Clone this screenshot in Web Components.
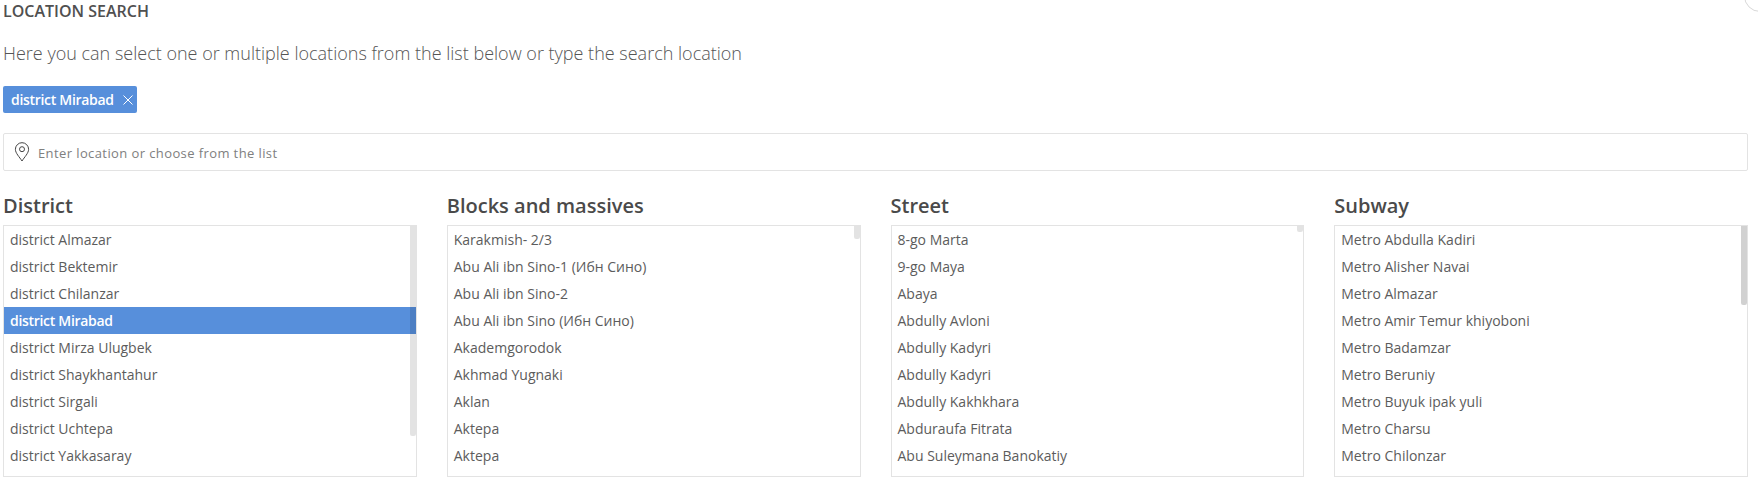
<!DOCTYPE html>
<html>
<head>
<meta charset="utf-8">
<title>Location search</title>
<style>
  html, body { margin: 0; padding: 0; background: #fff; }
  body { font-family: "Open Sans", "Noto Sans", sans-serif; color: #4a4a4a; overflow: hidden; height: 486px; }
</style>
</head>
<body>
<location-search>
  <list-column title="District" thumb="210" selected="district Mirabad"
    items="district Almazar|district Bektemir|district Chilanzar|district Mirabad|district Mirza Ulugbek|district Shaykhantahur|district Sirgali|district Uchtepa|district Yakkasaray"></list-column>
  <list-column title="Blocks and massives" thumb="13"
    items="Karakmish- 2/3|Abu Ali ibn Sino-1 (Ибн Сино)|Abu Ali ibn Sino-2|Abu Ali ibn Sino (Ибн Сино)|Akademgorodok|Akhmad Yugnaki|Aklan|Aktepa|Aktepa"></list-column>
  <list-column title="Street" thumb="6"
    items="8-go Marta|9-go Maya|Abaya|Abdully Avloni|Abdully Kadyri|Abdully Kadyri|Abdully Kakhkhara|Abduraufa Fitrata|Abu Suleymana Banokatiy"></list-column>
  <list-column title="Subway" thumb="79" style="--thumb:rgba(0,0,0,0.18)"
    items="Metro Abdulla Kadiri|Metro Alisher Navai|Metro Almazar|Metro Amir Temur khiyoboni|Metro Badamzar|Metro Beruniy|Metro Buyuk ipak yuli|Metro Charsu|Metro Chilonzar"></list-column>
</location-search>

<script>
customElements.define('location-tag', class extends HTMLElement {
  constructor() {
    super()
    const shadow = this.attachShadow({ mode: 'open' })
    shadow.innerHTML = `
    <style>
      :host{
        display:inline-flex;
        align-items:center;
        height:27px;
        box-sizing:border-box;
        padding:0 4px 0 8px;
        gap:9px;
        background:#578fdb;
        border-radius:2px;
        color:#fff;
        font-size:14px;
        font-weight:600;
        letter-spacing:-0.3px;
      }
      svg{ display:block; }
    </style>
    <slot></slot>
    <svg width="10" height="10" viewBox="0 0 10 10" fill="none" stroke="#fff" stroke-width="1"><path d="M.5.5l9 9M9.5.5l-9 9"/></svg>`
  }
})

customElements.define('location-input', class extends HTMLElement {
  constructor() {
    super()
    const shadow = this.attachShadow({ mode: 'open' })
    shadow.innerHTML = `
    <style>
      :host{
        display:flex;
        align-items:center;
        height:38px;
        box-sizing:border-box;
        border:1px solid #e3e3e3;
        border-radius:2px;
        padding-left:10px;
        gap:8px;
      }
      svg{ display:block; flex:none; }
      .placeholder{
        font-size:13px;
        letter-spacing:0.4px;
        color:#808080;
        position:relative;
        top:1px;
      }
    </style>
    <svg width="16" height="20" viewBox="0 0 16 20" fill="none" stroke="#444" stroke-width="1">
      <path d="M8 19C5.5 15 1.4 11.2 1.4 7.3a6.6 6.6 0 0 1 13.2 0C14.6 11.2 10.5 15 8 19z"/>
      <circle cx="8" cy="7.2" r="2.5"/>
    </svg>
    <span class="placeholder"><slot></slot></span>`
  }
})

customElements.define('list-column', class extends HTMLElement {
  constructor() {
    super()
    const shadow = this.attachShadow({ mode: 'open' })
    shadow.innerHTML = `
    <style>
      :host{ display:block; min-width:0; }
      h3{
        margin:0 0 5px;
        font-size:20px;
        line-height:28px;
        font-weight:600;
        color:#4a4a4a;
      }
      .box{
        position:relative;
        height:252px;
        box-sizing:border-box;
        border:1px solid #e3e3e3;
        overflow:hidden;
      }
      .row{
        height:27px;
        line-height:27px;
        padding-left:6px;
        font-size:14px;
        color:#5c5c5c;
        white-space:nowrap;
      }
      .row.selected{
        background:#578fdb;
        color:#fff;
        font-weight:600;
        letter-spacing:-0.3px;
      }
      .thumb{
        position:absolute;
        top:0;
        right:0;
        width:6px;
        border-radius:0 0 2px 2px;
        background:var(--thumb, rgba(0,0,0,0.11));
      }
    </style>
    <h3></h3>
    <div class="box"><div class="rows"></div><div class="thumb"></div></div>`
  }
  connectedCallback() {
    this.shadowRoot.querySelector('h3').innerText = this.title
    const rows = this.shadowRoot.querySelector('.rows')
    for (const name of this.getAttribute('items').split('|')) {
      const row = document.createElement('div')
      row.className = 'row'
      if (name === this.getAttribute('selected')) row.classList.add('selected')
      row.textContent = name
      rows.appendChild(row)
    }
    this.shadowRoot.querySelector('.thumb').style.height = this.getAttribute('thumb') + 'px'
  }
  get title() {
    return this.getAttribute('title')
  }
})

customElements.define('location-search', class extends HTMLElement {
  constructor() {
    super()
    const shadow = this.attachShadow({ mode: 'open' })
    shadow.innerHTML = `
    <style>
      :host{
        display:block;
        position:relative;
        height:486px;
        box-sizing:border-box;
        padding:0 10px 0 3px;
        overflow:hidden;
      }
      .title{
        font-size:16px;
        line-height:22px;
        font-weight:600;
        color:#505050;
      }
      .lead{
        margin-top:19px;
        font-size:18px;
        line-height:24px;
        font-weight:300;
        color:#555;
      }
      location-tag{ margin-top:21px; }
      .tagrow{ display:flex; }
      location-input{ margin-top:20px; }
      .cols{
        display:grid;
        grid-template-columns:repeat(4, 1fr);
        column-gap:30px;
        margin-top:21px;
      }
      .corner{
        position:absolute;
        top:-20px;
        right:-18px;
        width:32px;
        height:32px;
        box-sizing:border-box;
        border:1px solid #d8d8d8;
        border-radius:50%;
      }
    </style>
    <div class="title">LOCATION SEARCH</div>
    <div class="lead">Here you can select one or multiple locations from the list below or type the search location</div>
    <div class="tagrow"><location-tag>district Mirabad</location-tag></div>
    <location-input>Enter location or choose from the list</location-input>
    <div class="cols"><slot></slot></div>
    <div class="corner"></div>`
  }
})
</script>
</body>
</html>
